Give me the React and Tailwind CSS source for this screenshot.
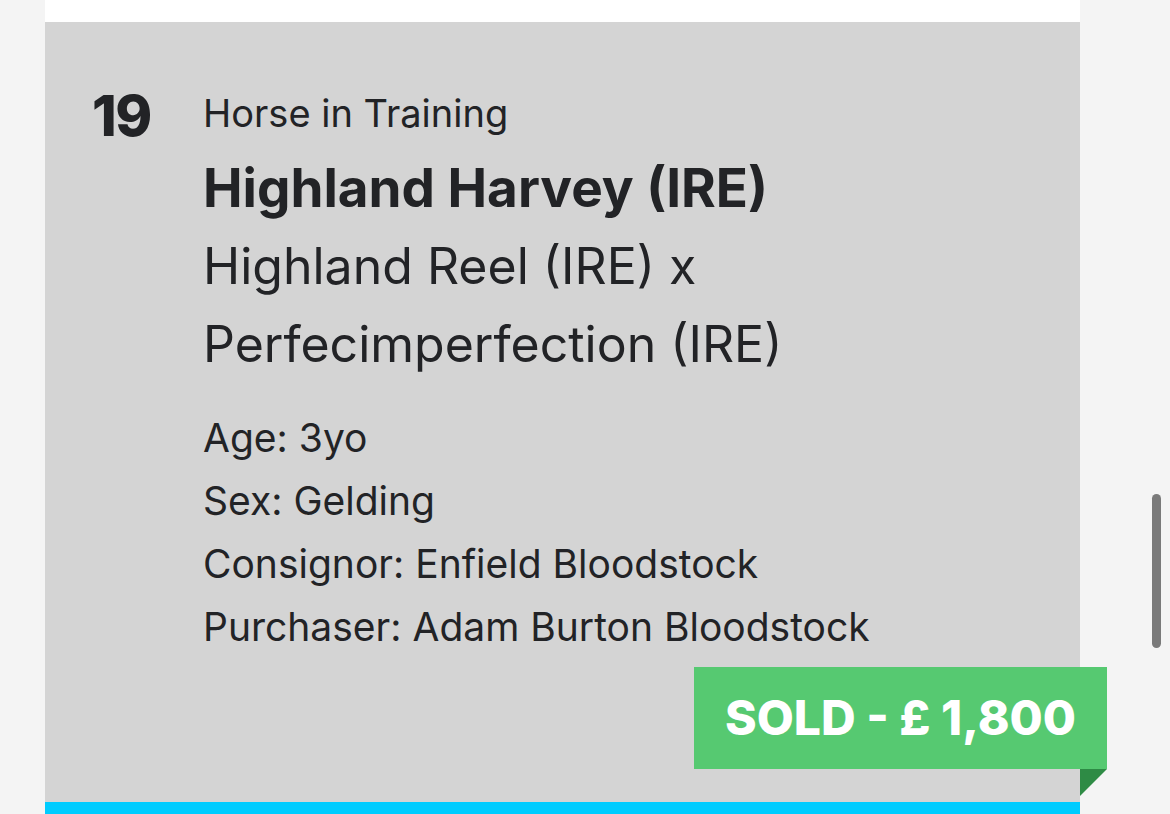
import React from 'react';

const font = { fontFamily: 'Inter, "Liberation Sans", sans-serif' };

const details = [
  ['Age', '3yo'],
  ['Sex', 'Gelding'],
  ['Consignor', 'Enfield Bloodstock'],
  ['Purchaser', 'Adam Burton Bloodstock'],
];

const App = () => {
  return (
    <div className="w-full h-[814px] bg-[#f4f4f4] relative overflow-hidden" style={font}>
      {/* Lot card */}
      <div className="ml-[45px] w-[1035px] flex flex-col">
        <div className="h-[22px] bg-white"></div>
        <div className="h-[780px] bg-[#d4d4d4] relative pt-[69px] pl-[47px] flex">
          <div className="w-[111px] pt-[3px] text-[#222326] text-[56px] font-extrabold leading-[44px] tracking-tight">19</div>
          <div className="flex flex-col text-[#222326]">
            <span className="text-[38px] leading-[44px]">Horse in Training</span>
            <span className="mt-[15px] text-[53px] font-bold leading-[77px]">Highland Harvey (IRE)</span>
            <span className="text-[50px] leading-[78px]">Highland Reel (IRE) x</span>
            <span className="text-[50px] leading-[78px]">Perfecimperfection (IRE)</span>
            <div className="mt-[23px] flex flex-col">
              {details.map(([label, value]) => (
                <span key={label} className="text-[39px] leading-[63px]">
                  {label}: {value}
                </span>
              ))}
            </div>
          </div>

          {/* Sold badge */}
          <div className="absolute top-[645px] right-[-27px] flex flex-col items-end">
            <div className="h-[102px] w-[413px] bg-[#56c971] flex items-center justify-center">
              <span className="text-white text-[48px] font-extrabold">SOLD - £ 1,800</span>
            </div>
            <svg width="27" height="27" viewBox="0 0 27 27" className="block">
              <polygon points="0,0 27,0 0,27" fill="#2e8b45" />
            </svg>
          </div>
        </div>
        <div className="h-[20px] bg-[#00ccff]"></div>
      </div>

      {/* Scrollbar */}
      <div className="absolute left-[1152px] top-[494px] w-[9px] h-[154px] rounded-full bg-[#7a7a7a]"></div>
    </div>
  );
};

export default App;
